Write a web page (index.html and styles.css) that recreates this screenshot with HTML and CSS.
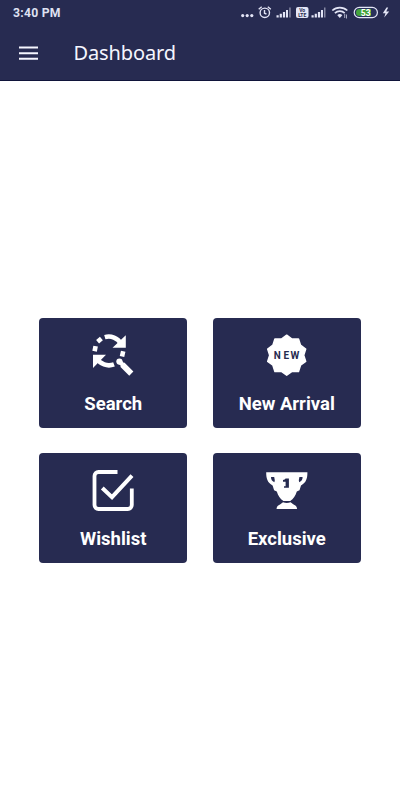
FILE: index.html
```html
<!DOCTYPE html>
<html lang="en">
<head>
<meta charset="utf-8">
<meta name="viewport" content="width=device-width, initial-scale=1">
<title>Dashboard</title>
<link rel="stylesheet" href="styles.css">
</head>
<body>
<header class="top">
  <div class="status">
    <span class="time">3:40 PM</span>
    <svg class="indicators" viewBox="240 0 152 26" width="152" height="26" aria-hidden="true">
      <g fill="#e3e5f6">
        <circle cx="242.7" cy="15.6" r="1.6"/><circle cx="247.2" cy="15.6" r="1.6"/><circle cx="251.8" cy="15.6" r="1.6"/>
        <path d="M276.5 15.2h2.2v2.3h-2.2zM279.7 13.8h2.2v3.7h-2.2zM282.9 12h2.2v5.5h-2.2zM286 10h2v7.5h-2z"/>
        <path d="M311.5 15.2h2.2v2.3h-2.2zM314.7 13.8h2.2v3.7h-2.2zM317.9 12h2.2v5.5h-2.2zM321 10h2v7.5h-2z"/>
        <path d="M289.2 7.5h1.5v10h-1.5zM324 7.5h1.5v10H324z" opacity=".5"/>
        <rect x="296" y="7" width="12.5" height="11" rx="2"/>
        <path d="M386.5 7.5l-3.7 5.8h2.7l-1.3 4.2 5-6h-3l2-4z"/>
        <path d="M337.3 15.2a3.4 3.4 0 0 1 5 0l-2.5 2.8z"/>
        <path d="M344.2 14h1v4h-1zM346 14.5h1v4h-1z" opacity=".7"/>
      </g>
      <g fill="none" stroke="#e3e5f6" stroke-width="1.4">
        <circle cx="264.8" cy="12.8" r="4.7"/>
        <path d="M264.5 10v3.2l2 1M258.7 9.2l3-2.4M267.8 6.8l3 2.4"/>
        <path d="M332.3 10.5a11 11 0 0 1 15 0M334.9 13.2a7 7 0 0 1 9.8 0" stroke-width="1.7"/>
      </g>
      <text class="volte" x="302.2" y="12.3">Vo</text>
      <text class="volte" x="302.2" y="17">LTE</text>
      <rect x="354.2" y="7.4" width="23.2" height="10.2" rx="5.1" fill="#29315a" stroke="#e3e5f6" stroke-width="1.2"/>
      <path d="M359.5 9H371v7h-11.5a3.5 3.5 0 0 1 0-7z" fill="#45a53c"/>
      <text class="battery" x="365.7" y="15.5">53</text>
    </svg>
  </div>
  <div class="toolbar">
    <svg class="menu" width="20" height="14" viewBox="0 0 20 14" role="img" aria-label="Menu"><path d="M0 1.5h19M0 7.3h19M0 12.7h19" stroke="#f5f6ff" stroke-width="2"/></svg>
    <h1 class="title">Dashboard</h1>
  </div>
</header>
<main class="grid">
  <a class="card">
    <svg class="icon" viewBox="1 0 64 60" aria-hidden="true">
      <g fill="none" stroke="#fff" stroke-width="4.6">
        <path d="M24.8 12.1A14.3 14.3 0 0 1 41 18.5"/>
        <path d="M17.6 16.8l3.8-3.2M14.6 26.3l1-5.2M43.2 26.2l-1.2 5.2"/>
        <path d="M16.5 33A14.3 14.3 0 0 0 34 39.4"/>
      </g>
      <path d="M45.8 10.3v12.4H32.5zM13 29.8h13L13 43z" fill="#fff"/>
      <circle cx="39.4" cy="36.6" r="3.1" fill="#fff"/>
      <path d="M39.5 36.5l4.2 4.2" stroke="#fff" stroke-width="4.4"/>
      <path d="M42.3 39.6l9 9" stroke="#fff" stroke-width="5.8"/>
    </svg>
    <span>Search</span>
  </a>
  <a class="card">
    <svg class="icon" viewBox="0 0 64 60" aria-hidden="true">
      <path transform="translate(31.7 30.2)" d="M0-20L5.3-16.2 11.8-16.2 13.8-10 19-6.2 17 0 19 6.2 13.8 10 11.8 16.2 5.3 16.2 0 20-5.3 16.2-11.8 16.2-13.8 10-19 6.2-17 0-19-6.2-13.8-10-11.8-16.2-5.3-16.2z" fill="#fff" stroke="#fff" stroke-width="1.5" stroke-linejoin="round"/>
      <g class="new">
        <text x="18.8" y="34.4" textLength="7" lengthAdjust="spacingAndGlyphs">N</text>
        <text x="28.6" y="34.4" textLength="5.6" lengthAdjust="spacingAndGlyphs">E</text>
        <text x="35.4" y="34.4" textLength="8.8" lengthAdjust="spacingAndGlyphs">W</text>
      </g>
    </svg>
    <span>New Arrival</span>
  </a>
  <a class="card">
    <svg class="icon" viewBox="1 0 64 60" aria-hidden="true">
      <path d="M37.5 12H18.5a4 4 0 0 0-4 4v29a4 4 0 0 0 4 4h29.3a4 4 0 0 0 4-4V28.5" fill="none" stroke="#fff" stroke-width="3.8"/>
      <path d="M22.3 28l9.7 9.2L52 15.7" fill="none" stroke="#fff" stroke-width="4"/>
    </svg>
    <span>Wishlist</span>
  </a>
  <a class="card">
    <svg class="icon" viewBox="0 0 64 60" aria-hidden="true">
      <path fill="#fff" fill-rule="evenodd" d="M11.2 12.3h41.2c.1 6-1.2 10.5-6.4 13.2l-1.5 4.8-2.7 1.2c-1.3 4.2-3.3 7.2-6.6 9.5h-6.8c-3.3-2.3-5.3-5.3-6.6-9.5l-2.7-1.2-1.5-4.8c-5.2-2.7-6.5-7.2-6.4-13.2zM16 17c0 2.5 1 4.3 3.4 5.2l.4-2-.6-3.2zM47.6 17h-3.2l-.6 3.2.4 2c2.4-.9 3.4-2.7 3.4-5.2z"/>
      <path d="M28 42.2q3.8 1.6 7.6 0l3 2.3c2 .8 3.2 2 3.5 4.5H21.5c.3-2.5 1.5-3.7 3.5-4.5z" fill="#fff"/>
      <path d="M30.6 18.6h3.3v9.2h-4.9v-1.6h1.6v-4.5h-2.6v-1.8q2 0 2.6-1.3z" fill="#262b50"/>
    </svg>
    <span>Exclusive</span>
  </a>
</main>
</body>
</html>
```
FILE: styles.css
```css
* { box-sizing: border-box; }
body {
  margin: 0;
  height: 800px;
  display: flex;
  flex-direction: column;
  background: #fff;
  font-family: Roboto, sans-serif;
}
.top {
  height: 81px;
  background: #272b51;
  border-bottom: 1px solid #10143a;
  color: #f5f6ff;
}
.status {
  height: 26px;
  padding: 0 8px 0 13px;
  display: flex;
  justify-content: space-between;
  align-items: center;
}
.time {
  font-size: 12.2px;
  font-weight: 700;
  color: #dfe1f2;
  letter-spacing: .25px;
}
.volte {
  font: 700 5px Roboto, sans-serif;
  text-anchor: middle;
  fill: #262b50;
}
.battery {
  font: 700 8.5px Roboto, sans-serif;
  text-anchor: middle;
  fill: #fff;
}
.toolbar {
  height: 54px;
  padding-left: 19px;
  display: flex;
  align-items: center;
  gap: 34.5px;
}
.title {
  margin: 0;
  font: 400 20px/28px "Noto Sans", sans-serif;
  letter-spacing: -.12px;
}
.grid {
  flex: 1;
  display: grid;
  grid-template-columns: 148px 148px;
  grid-template-rows: 110px 110px;
  gap: 25.5px;
  place-content: center;
}
.card {
  display: flex;
  flex-direction: column;
  align-items: center;
  padding-top: 7px;
  background: #272b51;
  border-radius: 4px;
  color: #fff;
  font-size: 18.5px;
  font-weight: 700;
  line-height: 22px;
}
.icon {
  width: 64px;
  height: 60px;
  margin-bottom: 8px;
}
.new {
  font: 700 11.5px Roboto, sans-serif;
  fill: #262b50;
}
```
